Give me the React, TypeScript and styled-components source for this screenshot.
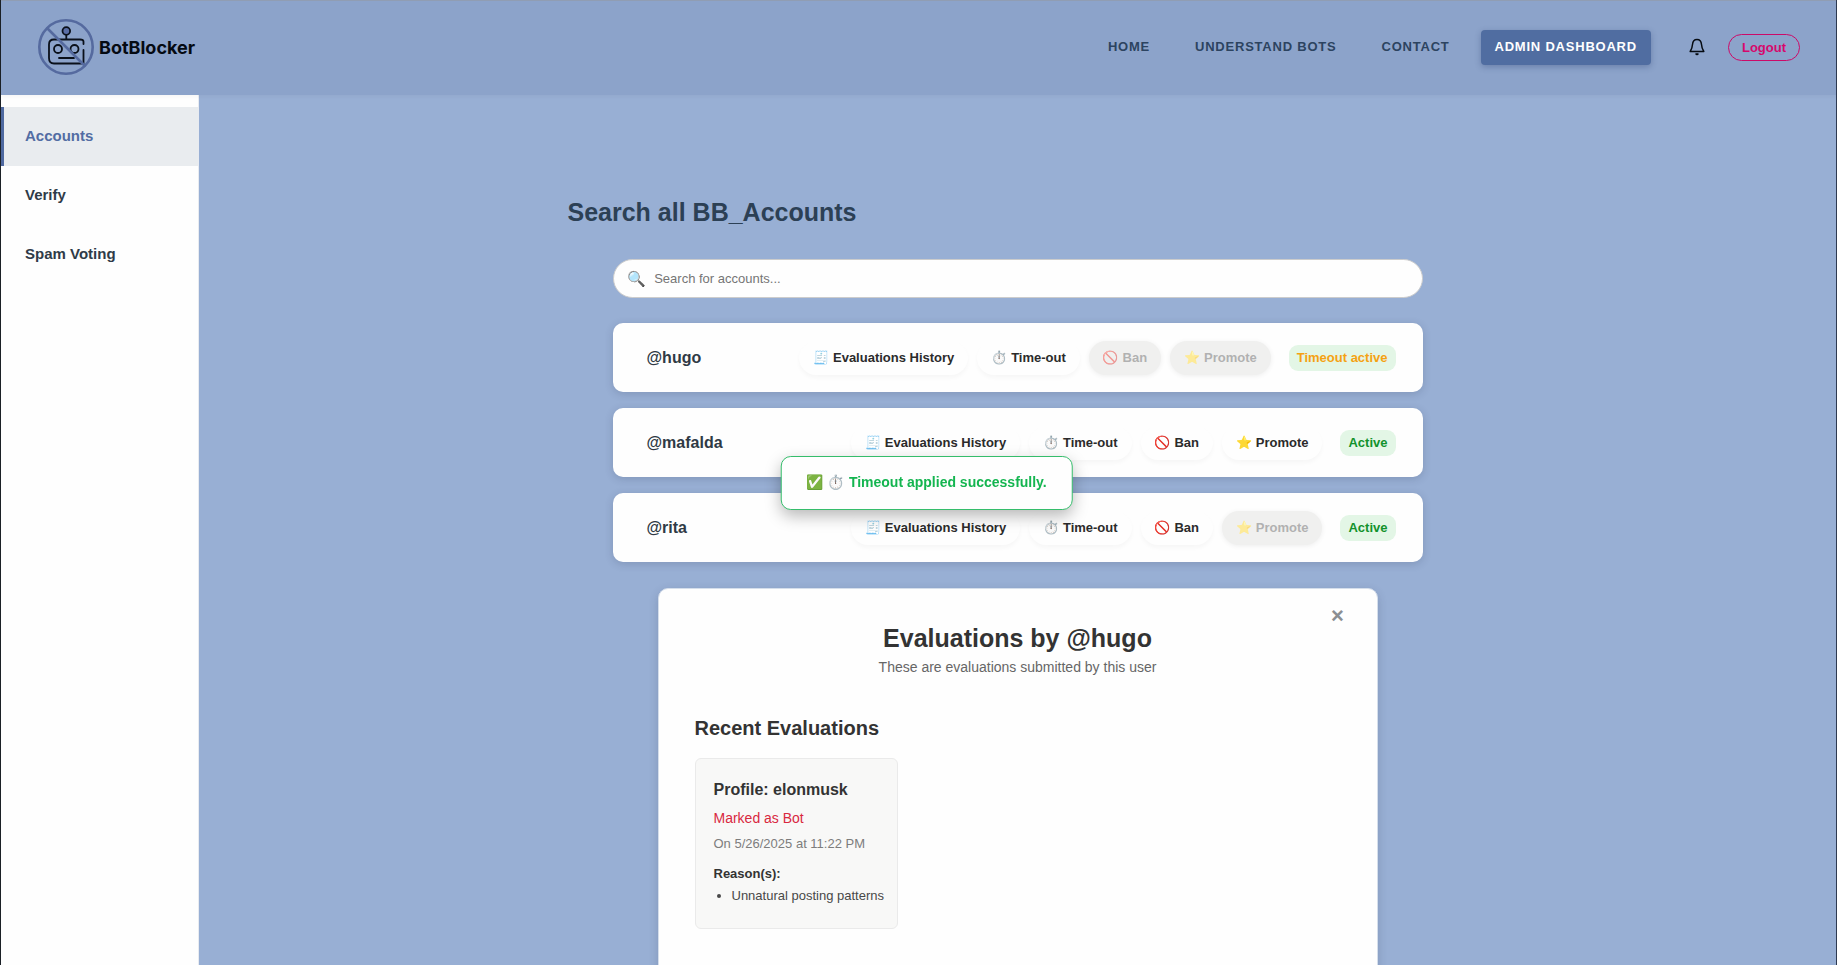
import React, { useState } from "react";
import styled, { createGlobalStyle, css } from "styled-components";

const GlobalStyle = createGlobalStyle`
  *, *::before, *::after { box-sizing: border-box; }
  html, body { margin: 0; padding: 0; }
  body, button, input {
    font-family: "Liberation Sans", Arial, "Noto Color Emoji", sans-serif;
  }
  h1, h2, h3, p, ul { margin: 0; padding: 0; }
`;

const Shell = styled.div`
  display: flex;
  flex-direction: column;
  height: 100vh;
  border-left: 1px solid #1b2026;
  border-right: 1px solid #2d3950;
  background: #98afd4;
  color: #333;
`;

const Header = styled.header`
  display: flex;
  align-items: center;
  justify-content: space-between;
  flex: none;
  height: 95px;
  padding: 0 36px 2px;
  border-top: 1px solid #909db3;
  background: #8ca3ca;
  box-shadow: 0 2px 4px rgba(0, 0, 0, 0.03);
  z-index: 1;
`;

const Brand = styled.a`
  display: flex;
  align-items: center;
  gap: 4px;
  color: #050a12;
  font: 700 18px Inter, "Liberation Sans", sans-serif;
  text-decoration: none;
`;

const Nav = styled.nav`
  display: flex;
  align-items: center;
  gap: 17px;
`;

const NavLink = styled.a<{ $active?: boolean }>`
  padding: 0 14px 2px;
  border-radius: 4px;
  color: #2c4360;
  font-size: 13px;
  font-weight: 700;
  line-height: 33px;
  letter-spacing: 0.06em;
  text-transform: uppercase;
  text-decoration: none;
  ${(p) =>
    p.$active &&
    css`
      background: #506da1;
      color: #fff;
      box-shadow: 0 2px 6px rgba(30, 50, 100, 0.3);
    `}
`;

const Actions = styled.div`
  display: flex;
  align-items: center;
  gap: 22px;
  margin-left: 20px;
`;

const BellButton = styled.button`
  display: flex;
  padding: 0;
  border: 0;
  background: none;
  color: #060b12;
`;

const LogoutButton = styled.button`
  height: 27px;
  padding: 0 13px;
  border: 1px solid #cc0a68;
  border-radius: 14px;
  background: transparent;
  color: #d6086c;
  font-size: 13px;
  font-weight: 700;
`;

const Body = styled.div`
  display: flex;
  flex: 1;
  min-height: 0;
`;

const Sidebar = styled.aside`
  flex: none;
  width: 198px;
  padding-top: 12px;
  background: #fefefe;
  border-right: 1px solid #e8ebf1;
`;

const SideLink = styled.a<{ $active?: boolean }>`
  display: block;
  padding: 0 0 2px 21px;
  border-left: 3px solid ${(p) => (p.$active ? "#4f69a0" : "transparent")};
  background: ${(p) => (p.$active ? "#e9ecef" : "transparent")};
  color: ${(p) => (p.$active ? "#526ca3" : "#2f3b48")};
  font-size: 15px;
  font-weight: 700;
  line-height: 57px;
  text-decoration: none;
`;

const Main = styled.main`
  flex: 1;
  overflow-y: auto;
  scrollbar-width: none;
  padding: 100px 24px 40px;
`;

const Content = styled.div`
  display: flex;
  flex-direction: column;
  align-items: center;
  max-width: 900px;
  margin: 0 auto;
`;

const PageTitle = styled.h1`
  align-self: flex-start;
  margin-bottom: 30px;
  color: #2c4055;
  font-size: 25px;
  line-height: 34px;
`;

const SearchBar = styled.label`
  display: flex;
  align-items: center;
  gap: 8px;
  width: 90%;
  height: 39px;
  margin-bottom: 25px;
  padding: 0 14px;
  border: 1px solid #ccc;
  border-radius: 20px;
  background: #fefefe;
  font-size: 15px;
`;

const SearchInput = styled.input`
  flex: 1;
  padding: 0;
  border: 0;
  outline: 0;
  background: none;
  color: #333;
  font-size: 13px;
  &::placeholder { color: #757575; }
`;

const AccountList = styled.ul`
  display: flex;
  flex-direction: column;
  gap: 16px;
  width: 90%;
  margin-bottom: 26px;
  list-style: none;
`;

const AccountRow = styled.li`
  display: flex;
  align-items: center;
  gap: 9px;
  height: 69px;
  padding: 0 27px 0 34px;
  border-radius: 10px;
  background: #fefefe;
  box-shadow: 0 2px 8px rgba(40, 50, 80, 0.2);
`;

const Handle = styled.span`
  flex: 1;
  color: #2f3a45;
  font-size: 16px;
  font-weight: 700;
`;

const ActionButton = styled.button`
  height: 34px;
  padding: 0 14px;
  border: 0;
  border-radius: 17px;
  background: #fefefe;
  box-shadow: 0 3px 4px rgba(0, 0, 0, 0.03);
  color: #2b2b2b;
  font-size: 13px;
  font-weight: 700;
  white-space: nowrap;
  &:disabled {
    background: #e3e3e1;
    opacity: 0.5;
    color: #666;
    box-shadow: 0 1px 4px rgba(0, 0, 0, 0.12);
  }
`;

const StatusBadge = styled.span<{ $timeout?: boolean }>`
  margin-left: 9px;
  padding: 0 8px;
  border-radius: 9px;
  background: #e3f6e6;
  color: ${(p) => (p.$timeout ? "#f5a212" : "#12922c")};
  font-size: 13px;
  font-weight: 700;
  line-height: 26px;
  white-space: nowrap;
`;

const Panel = styled.section`
  position: relative;
  width: 80%;
  min-height: 460px;
  padding: 32px 36px;
  border: 1px solid #d5deeb;
  border-radius: 10px;
  background: #fefefe;
  box-shadow: 0 3px 10px rgba(40, 50, 80, 0.2);
`;

const CloseButton = styled.button`
  position: absolute;
  top: 14px;
  right: 27px;
  width: 24px;
  height: 26px;
  padding: 0;
  border: 0;
  background: none;
  color: #8b8f92;
  font-size: 22px;
  font-weight: 700;
  line-height: 26px;
`;

const PanelTitle = styled.h2`
  font-size: 25px;
  line-height: 34px;
  text-align: center;
`;

const PanelSubtitle = styled.p`
  margin-bottom: 36px;
  color: #666;
  font-size: 14px;
  line-height: 24px;
  text-align: center;
`;

const SectionTitle = styled.h3`
  margin-bottom: 17px;
  font-size: 20px;
  line-height: 26px;
`;

const CardGrid = styled.div`
  display: grid;
  grid-template-columns: repeat(3, 1fr);
  gap: 18px;
`;

const EvaluationCard = styled.article`
  padding: 18px 12px 23px 18px;
  border: 1px solid #eaeaea;
  border-radius: 6px;
  background: #f8f8f7;
`;

const ProfileName = styled.p`
  margin-bottom: 2px;
  font-size: 16px;
  font-weight: 700;
  line-height: 26px;
`;

const Verdict = styled.p`
  color: #d9283f;
  font-size: 14px;
  line-height: 26px;
`;

const Timestamp = styled.p`
  margin-bottom: 4px;
  color: #7d7d7d;
  font-size: 13px;
  line-height: 26px;
`;

const ReasonLabel = styled.p`
  font-size: 13px;
  font-weight: 700;
  line-height: 26px;
`;

const ReasonList = styled.ul`
  padding-left: 18px;
  color: #484848;
  font-size: 13px;
  line-height: 18px;
`;

const Toast = styled.div`
  position: fixed;
  top: 50%;
  left: calc(50% + 8px);
  transform: translate(-50%, -50%);
  padding: 0 25px 2px;
  border: 1px solid #35bd6b;
  border-radius: 10px;
  background: #fefefe;
  box-shadow: 0 6px 16px rgba(0, 0, 0, 0.28);
  color: #14b550;
  font-size: 14px;
  font-weight: 700;
  line-height: 50px;
  white-space: nowrap;
  z-index: 2;
`;

function Logo() {
  return (
    <svg width="58" height="58" viewBox="0 0 58 58" fill="none" stroke="#0a101a" strokeWidth="1.8" strokeLinecap="round" aria-hidden="true">
      <path d="M46.500 26V23.500Q46.500 21.500 43 21.500H17Q12 21.500 12 26.500V40Q12 45.500 17 45.500H46.500V32" />
      <circle cx="21" cy="31" r="4" />
      <circle cx="37.500" cy="31" r="4" />
      <path d="M22 40H37M29.300 21V17" />
      <circle cx="29.300" cy="13" r="3.800" fill="#5a6ea5" />
      <circle cx="29" cy="29" r="26.700" stroke="#556a9f" strokeWidth="2.600" />
      <path d="M10.500 10.500L47.500 47.500" stroke="#556a9f" strokeWidth="2.600" />
    </svg>
  );
}

function BellIcon() {
  return (
    <svg width="18" height="18" viewBox="0 0 18 18" fill="none" stroke="currentColor" strokeWidth="1.500" strokeLinecap="round" strokeLinejoin="round" aria-hidden="true">
      <path d="M9 1.500C6 1.500 4.700 3.800 4.500 6.500C4.300 9.500 3.800 11 2.200 13.500H15.800C14.200 11 13.700 9.500 13.500 6.500C13.300 3.800 12 1.500 9 1.500Z" />
      <path d="M8 16H10L9 16.600Z" />
    </svg>
  );
}

type Account = { name: string; timeout?: boolean; banOff?: boolean; promoteOff?: boolean };

const accounts: Account[] = [
  { name: "hugo", timeout: true, banOff: true, promoteOff: true },
  { name: "mafalda" },
  { name: "rita", promoteOff: true },
];

export default function App() {
  const [query, setQuery] = useState("");
  return (
    <Shell>
      <GlobalStyle />
      <Header>
        <Brand href="#"><Logo />BotBlocker</Brand>
        <Nav>
          <NavLink href="#home">Home</NavLink>
          <NavLink href="#bots">Understand Bots</NavLink>
          <NavLink href="#contact">Contact</NavLink>
          <NavLink href="#admin" $active>Admin Dashboard</NavLink>
          <Actions>
            <BellButton aria-label="Notifications"><BellIcon /></BellButton>
            <LogoutButton>Logout</LogoutButton>
          </Actions>
        </Nav>
      </Header>
      <Body>
        <Sidebar>
          <SideLink href="#accounts" $active>Accounts</SideLink>
          <SideLink href="#verify">Verify</SideLink>
          <SideLink href="#spam">Spam Voting</SideLink>
        </Sidebar>
        <Main>
          <Content>
            <PageTitle>Search all BB_Accounts</PageTitle>
            <SearchBar>
              <span>🔍</span>
              <SearchInput
                type="text"
                placeholder="Search for accounts..."
                value={query}
                onChange={(e) => setQuery(e.target.value)}
              />
            </SearchBar>
            <AccountList>
              {accounts.map((a) => (
                <AccountRow key={a.name}>
                  <Handle>@{a.name}</Handle>
                  <ActionButton>🧾 Evaluations History</ActionButton>
                  <ActionButton>⏱️ Time-out</ActionButton>
                  <ActionButton disabled={a.banOff}>🚫 Ban</ActionButton>
                  <ActionButton disabled={a.promoteOff}>⭐ Promote</ActionButton>
                  <StatusBadge $timeout={a.timeout}>{a.timeout ? "Timeout active" : "Active"}</StatusBadge>
                </AccountRow>
              ))}
            </AccountList>
            <Panel>
              <CloseButton aria-label="Close">×</CloseButton>
              <PanelTitle>Evaluations by @hugo</PanelTitle>
              <PanelSubtitle>These are evaluations submitted by this user</PanelSubtitle>
              <SectionTitle>Recent Evaluations</SectionTitle>
              <CardGrid>
                <EvaluationCard>
                  <ProfileName>Profile: elonmusk</ProfileName>
                  <Verdict>Marked as Bot</Verdict>
                  <Timestamp>On 5/26/2025 at 11:22 PM</Timestamp>
                  <ReasonLabel>Reason(s):</ReasonLabel>
                  <ReasonList>
                    <li>Unnatural posting patterns</li>
                  </ReasonList>
                </EvaluationCard>
              </CardGrid>
            </Panel>
          </Content>
        </Main>
      </Body>
      <Toast role="status">✅ ⏱️ Timeout applied successfully.</Toast>
    </Shell>
  );
}
